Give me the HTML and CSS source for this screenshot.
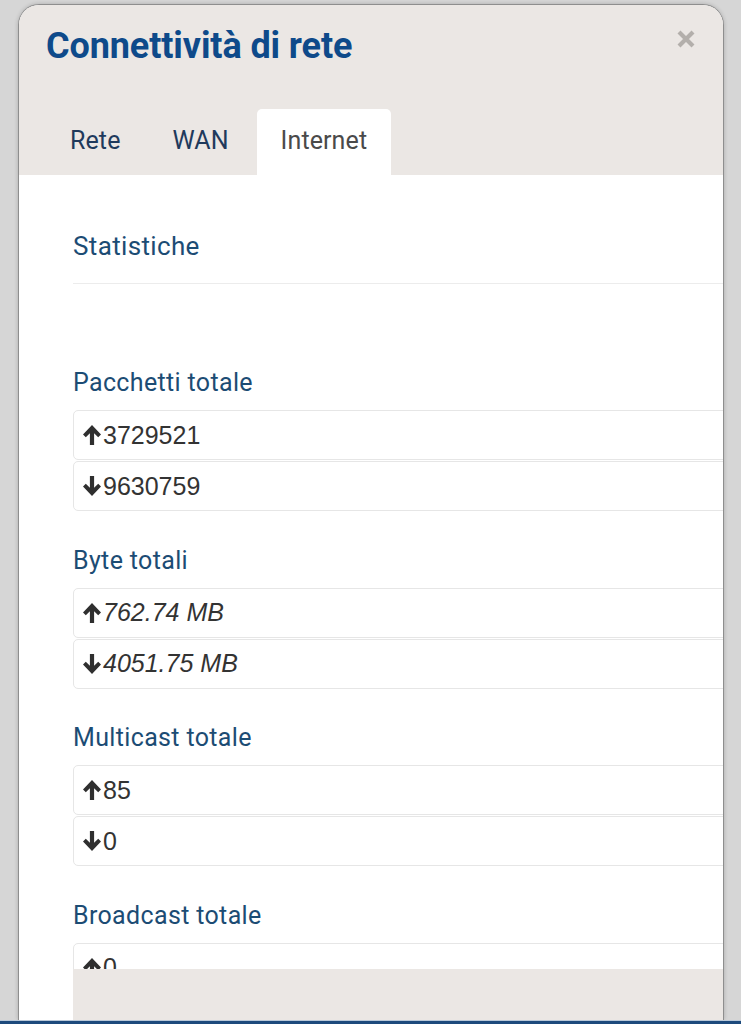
FILE: index.html
```html
<!DOCTYPE html>
<html lang="it">
<head>
    <meta charset="UTF-8">
    <meta name="viewport" content="width=device-width, initial-scale=1.0">
    <title>Connettività di rete</title>
    <link rel="stylesheet" href="styles.css">
</head>
<body>

    <div class="modal">
        <!-- Header with title and tabs -->
        <div class="modal-header">
            <div class="header-top">
                <h1 class="modal-title">Connettività di rete</h1>
                <button type="button" class="btn-close" aria-label="Chiudi">
                    <svg width="18" height="18" viewBox="0 0 18 18">
                        <path d="M2 2 L16 16 M16 2 L2 16" stroke="currentColor" stroke-width="4.2" fill="none"/>
                    </svg>
                </button>
            </div>
            <ul class="nav-tabs">
                <li class="tab">Rete</li>
                <li class="tab">WAN</li>
                <li class="tab active">Internet</li>
            </ul>
        </div>

        <div class="modal-body">
            <div class="stats">
                <h3 class="section-title">Statistiche</h3>
                <hr class="divider">

                <!-- Pacchetti -->
                <div class="stat-group">
                    <h4 class="stat-label">Pacchetti totale</h4>
                    <div class="stat-value">
                        <svg class="arrow" viewBox="0 0 18 20"><path d="M9 0 L18 9.5 L15.2 12.3 L11.1 8.2 V20 H6.9 V8.2 L2.8 12.3 L0 9.5 Z"/></svg>3729521
                    </div>
                    <div class="stat-value">
                        <svg class="arrow" viewBox="0 0 18 20"><path d="M9 20 L18 10.5 L15.2 7.7 L11.1 11.8 V0 H6.9 V11.8 L2.8 7.7 L0 10.5 Z"/></svg>9630759
                    </div>
                </div>

                <!-- Byte -->
                <div class="stat-group">
                    <h4 class="stat-label">Byte totali</h4>
                    <div class="stat-value italic">
                        <svg class="arrow" viewBox="0 0 18 20"><path d="M9 0 L18 9.5 L15.2 12.3 L11.1 8.2 V20 H6.9 V8.2 L2.8 12.3 L0 9.5 Z"/></svg>762.74 MB
                    </div>
                    <div class="stat-value italic">
                        <svg class="arrow" viewBox="0 0 18 20"><path d="M9 20 L18 10.5 L15.2 7.7 L11.1 11.8 V0 H6.9 V11.8 L2.8 7.7 L0 10.5 Z"/></svg>4051.75 MB
                    </div>
                </div>

                <!-- Multicast -->
                <div class="stat-group">
                    <h4 class="stat-label">Multicast totale</h4>
                    <div class="stat-value">
                        <svg class="arrow" viewBox="0 0 18 20"><path d="M9 0 L18 9.5 L15.2 12.3 L11.1 8.2 V20 H6.9 V8.2 L2.8 12.3 L0 9.5 Z"/></svg>85
                    </div>
                    <div class="stat-value">
                        <svg class="arrow" viewBox="0 0 18 20"><path d="M9 20 L18 10.5 L15.2 7.7 L11.1 11.8 V0 H6.9 V11.8 L2.8 7.7 L0 10.5 Z"/></svg>0
                    </div>
                </div>

                <!-- Broadcast -->
                <div class="stat-group">
                    <h4 class="stat-label">Broadcast totale</h4>
                    <div class="stat-value">
                        <svg class="arrow" viewBox="0 0 18 20"><path d="M9 0 L18 9.5 L15.2 12.3 L11.1 8.2 V20 H6.9 V8.2 L2.8 12.3 L0 9.5 Z"/></svg>0
                    </div>
                    <div class="stat-value">
                        <svg class="arrow" viewBox="0 0 18 20"><path d="M9 20 L18 10.5 L15.2 7.7 L11.1 11.8 V0 H6.9 V11.8 L2.8 7.7 L0 10.5 Z"/></svg>0
                    </div>
                </div>
            </div>
        </div>

        <div class="modal-footer"></div>
    </div>

    <div class="bottom-bar"></div>

</body>
</html>
```

FILE: styles.css
```css
/* Colori */
:root {
    --page-bg: #d6d6d6;
    --header-bg: #ebe7e4;
    --title-color: #0e4a8a;
    --label-color: #1c4c74;
    --tab-color: #1f3a5c;
    --tab-active-color: #4a4a4a;
    --value-color: #333333;
    --border-color: #e6e6e6;
    --bar-color: #1d4a7c;
}

body {
    margin: 0;
    height: 1024px;
    overflow: hidden;
    background-color: var(--page-bg);
    font-family: Roboto, "Liberation Sans", sans-serif;
}

.modal {
    margin: 4px 17px 0 18px;
    height: 1016px;
    box-sizing: border-box;
    background-color: #fff;
    border: 1px solid #8e8e8e;
    border-bottom: none;
    border-radius: 21px 21px 0 0;
    box-shadow: 0 0 4px rgba(0, 0, 0, 0.2);
    overflow: hidden;
    display: flex;
    flex-direction: column;
}

.modal-header {
    background-color: var(--header-bg);
    padding: 20px 0 0 27px;
}

.header-top {
    display: flex;
    justify-content: space-between;
    align-items: flex-start;
    margin-bottom: 41px;
}

.modal-title {
    margin: 0;
    font-size: 36px;
    line-height: 43px;
    font-weight: 700;
    color: var(--title-color);
    letter-spacing: -0.1px;
}

.btn-close {
    background: none;
    border: none;
    padding: 0;
    margin: 5px 28px 0 0;
    color: #b3afab;
    cursor: pointer;
    display: flex;
}

.nav-tabs {
    list-style: none;
    margin: 0;
    padding: 0;
    display: flex;
    gap: 4px;
}

.tab {
    padding: 17px 24px 19px;
    font-size: 25px;
    line-height: 30px;
    letter-spacing: 0.1px;
    color: var(--tab-color);
    border-radius: 5px 5px 0 0;
}

.tab.active {
    background-color: #fff;
    color: var(--tab-active-color);
}

.modal-body {
    height: 794px;
    overflow: hidden;
    padding-left: 54px;
}

.stats {
    margin-right: -40px;
    padding-top: 56px;
}

.section-title {
    margin: 0;
    font-size: 26px;
    line-height: 31px;
    font-weight: 400;
    letter-spacing: 0.35px;
    color: var(--label-color);
}

.divider {
    border: none;
    border-top: 1px solid #ececec;
    margin: 21px 0 84px;
}

.stat-group {
    margin-bottom: 34.5px;
}

.stat-label {
    margin: 0 0 12px;
    font-size: 25px;
    line-height: 30px;
    font-weight: 400;
    letter-spacing: 0.35px;
    color: var(--label-color);
}

.stat-value {
    height: 50px;
    box-sizing: border-box;
    border: 1px solid var(--border-color);
    border-radius: 5px;
    margin-bottom: 1px;
    padding-left: 9px;
    display: flex;
    align-items: center;
    font-family: "Liberation Sans", Arial, sans-serif;
    font-size: 25px;
    color: var(--value-color);
}

.stat-value.italic {
    font-style: italic;
}

.arrow {
    flex-shrink: 0;
    width: 18px;
    height: 20px;
    margin-right: 2px;
    fill: #2f2f2f;
}

.modal-footer {
    flex: 1;
    margin-left: 54px;
    background-color: var(--header-bg);
}

.bottom-bar {
    height: 4px;
    background-color: var(--bar-color);
    border-top: 1px solid #b9c8d8;
}
```
